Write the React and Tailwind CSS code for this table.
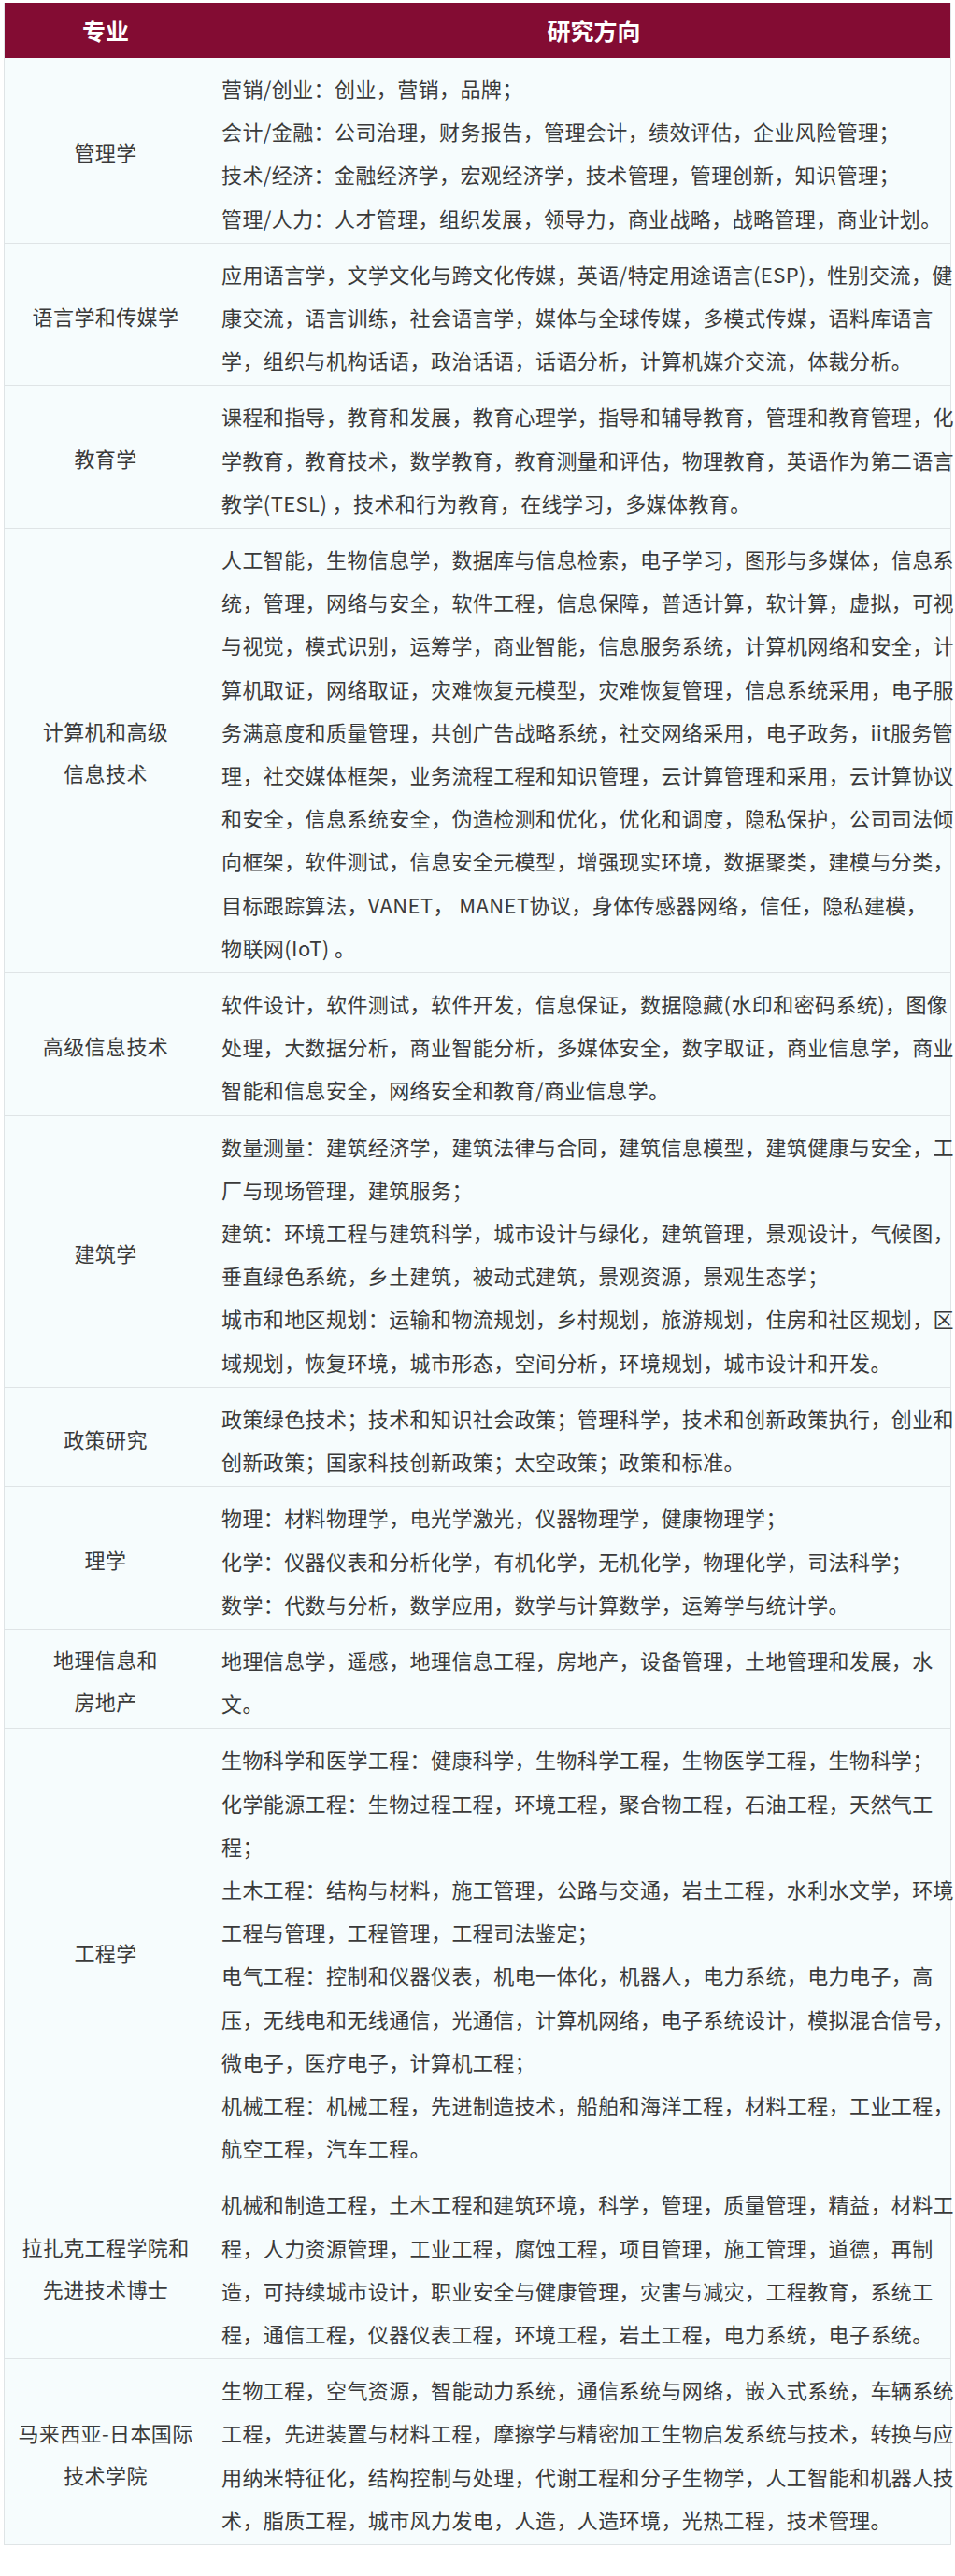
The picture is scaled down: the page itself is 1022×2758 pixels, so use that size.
const rows = [
    {
        major: ['管理学'],
        lines: [
            '营销/创业：创业，营销，品牌；',
            '会计/金融：公司治理，财务报告，管理会计，绩效评估，企业风险管理；',
            '技术/经济：金融经济学，宏观经济学，技术管理，管理创新，知识管理；',
            '管理/人力：人才管理，组织发展，领导力，商业战略，战略管理，商业计划。',
        ],
    },
    {
        major: ['语言学和传媒学'],
        lines: [
            '应用语言学，文学文化与跨文化传媒，英语/特定用途语言(ESP)，性别交流，健',
            '康交流，语言训练，社会语言学，媒体与全球传媒，多模式传媒，语料库语言',
            '学，组织与机构话语，政治话语，话语分析，计算机媒介交流，体裁分析。',
        ],
    },
    {
        major: ['教育学'],
        lines: [
            '课程和指导，教育和发展，教育心理学，指导和辅导教育，管理和教育管理，化',
            '学教育，教育技术，数学教育，教育测量和评估，物理教育，英语作为第二语言',
            '教学(TESL) ，技术和行为教育，在线学习，多媒体教育。',
        ],
    },
    {
        major: ['计算机和高级', '信息技术'],
        lines: [
            '人工智能，生物信息学，数据库与信息检索，电子学习，图形与多媒体，信息系',
            '统，管理，网络与安全，软件工程，信息保障，普适计算，软计算，虚拟，可视',
            '与视觉，模式识别，运筹学，商业智能，信息服务系统，计算机网络和安全，计',
            '算机取证，网络取证，灾难恢复元模型，灾难恢复管理，信息系统采用，电子服',
            '务满意度和质量管理，共创广告战略系统，社交网络采用，电子政务，iit服务管',
            '理，社交媒体框架，业务流程工程和知识管理，云计算管理和采用，云计算协议',
            '和安全，信息系统安全，伪造检测和优化，优化和调度，隐私保护，公司司法倾',
            '向框架，软件测试，信息安全元模型，增强现实环境，数据聚类，建模与分类，',
            '目标跟踪算法，VANET， MANET协议，身体传感器网络，信任，隐私建模，',
            '物联网(IoT) 。',
        ],
    },
    {
        major: ['高级信息技术'],
        lines: [
            '软件设计，软件测试，软件开发，信息保证，数据隐藏(水印和密码系统)，图像',
            '处理，大数据分析，商业智能分析，多媒体安全，数字取证，商业信息学，商业',
            '智能和信息安全，网络安全和教育/商业信息学。',
        ],
    },
    {
        major: ['建筑学'],
        lines: [
            '数量测量：建筑经济学，建筑法律与合同，建筑信息模型，建筑健康与安全，工',
            '厂与现场管理，建筑服务；',
            '建筑：环境工程与建筑科学，城市设计与绿化，建筑管理，景观设计，气候图，',
            '垂直绿色系统，乡土建筑，被动式建筑，景观资源，景观生态学；',
            '城市和地区规划：运输和物流规划，乡村规划，旅游规划，住房和社区规划，区',
            '域规划，恢复环境，城市形态，空间分析，环境规划，城市设计和开发。',
        ],
    },
    {
        major: ['政策研究'],
        lines: [
            '政策绿色技术；技术和知识社会政策；管理科学，技术和创新政策执行，创业和',
            '创新政策；国家科技创新政策；太空政策；政策和标准。',
        ],
    },
    {
        major: ['理学'],
        lines: [
            '物理：材料物理学，电光学激光，仪器物理学，健康物理学；',
            '化学：仪器仪表和分析化学，有机化学，无机化学，物理化学，司法科学；',
            '数学：代数与分析，数学应用，数学与计算数学，运筹学与统计学。',
        ],
    },
    {
        major: ['地理信息和', '房地产'],
        lines: [
            '地理信息学，遥感，地理信息工程，房地产，设备管理，土地管理和发展，水',
            '文。',
        ],
    },
    {
        major: ['工程学'],
        lines: [
            '生物科学和医学工程：健康科学，生物科学工程，生物医学工程，生物科学；',
            '化学能源工程：生物过程工程，环境工程，聚合物工程，石油工程，天然气工',
            '程；',
            '土木工程：结构与材料，施工管理，公路与交通，岩土工程，水利水文学，环境',
            '工程与管理，工程管理，工程司法鉴定；',
            '电气工程：控制和仪器仪表，机电一体化，机器人，电力系统，电力电子，高',
            '压，无线电和无线通信，光通信，计算机网络，电子系统设计，模拟混合信号，',
            '微电子，医疗电子，计算机工程；',
            '机械工程：机械工程，先进制造技术，船舶和海洋工程，材料工程，工业工程，',
            '航空工程，汽车工程。',
        ],
    },
    {
        major: ['拉扎克工程学院和', '先进技术博士'],
        lines: [
            '机械和制造工程，土木工程和建筑环境，科学，管理，质量管理，精益，材料工',
            '程，人力资源管理，工业工程，腐蚀工程，项目管理，施工管理，道德，再制',
            '造，可持续城市设计，职业安全与健康管理，灾害与减灾，工程教育，系统工',
            '程，通信工程，仪器仪表工程，环境工程，岩土工程，电力系统，电子系统。',
        ],
    },
    {
        major: ['马来西亚-日本国际', '技术学院'],
        lines: [
            '生物工程，空气资源，智能动力系统，通信系统与网络，嵌入式系统，车辆系统',
            '工程，先进装置与材料工程，摩擦学与精密加工生物启发系统与技术，转换与应',
            '用纳米特征化，结构控制与处理，代谢工程和分子生物学，人工智能和机器人技',
            '术，脂质工程，城市风力发电，人造，人造环境，光热工程，技术管理。',
        ],
    },
];

const App = () => {
    return (
        <div className="min-h-[2758px] bg-white pt-[3px] px-[4px] font-['Noto_Sans_CJK_SC','Noto_Sans',sans-serif]">
            <div className="w-[1014px] border-x border-b border-[#dfe4e6]">
                {/* Header */}
                <div className="flex h-[59px] bg-[#830c33] text-white text-[25px] font-bold">
                    <div className="w-[217px] flex items-center justify-center border-r border-white/50">
                        专业
                    </div>
                    <div className="flex-1 flex items-center justify-center pl-8">
                        研究方向
                    </div>
                </div>

                {/* Body rows */}
                {rows.map((row, i) => (
                    <div
                        key={i}
                        className={`flex bg-[#f6fcfd] text-[#3a3a3a] text-[22px] tracking-[0.4px] leading-[46.2px] ${i > 0 ? 'border-t border-[#dfe4e6]' : ''}`}
                    >
                        <div className="w-[217px] shrink-0 flex flex-col items-center justify-center border-r border-[#dfe4e6] leading-[45px] pt-[3px]">
                            {row.major.map((m) => (
                                <div key={m} className="whitespace-nowrap">{m}</div>
                            ))}
                        </div>
                        <div className="flex-1 pl-[15px] pt-[9px] pb-[4px]">
                            {row.lines.map((line, j) => (
                                <div key={j} className="whitespace-nowrap">{line}</div>
                            ))}
                        </div>
                    </div>
                ))}
            </div>
        </div>
    );
};

export default App;
